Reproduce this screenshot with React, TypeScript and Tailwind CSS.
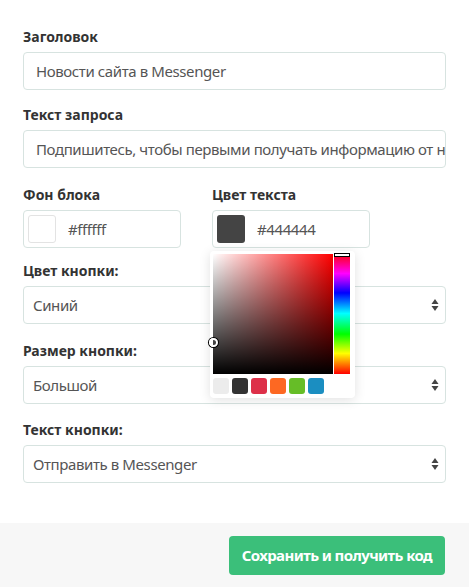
import React from 'react';

const font = { fontFamily: '"Noto Sans", "Open Sans", sans-serif' };

function Label({ children }: { children: React.ReactNode }) {
  return <div className="text-[14px] font-bold text-[#333] leading-[20px] mb-[5px]">{children}</div>;
}

function TextBox({ value }: { value: string }) {
  return (
    <div className="h-[38px] border border-[#d7e3e0] rounded-[4px] bg-white px-[12px] flex items-center overflow-hidden">
      <span className="text-[15px] tracking-[-0.4px] text-[#555] whitespace-nowrap">{value}</span>
    </div>
  );
}

function SelectBox({ value }: { value: string }) {
  return (
    <div className="h-[38px] border border-[#d7e3e0] rounded-[4px] bg-white pl-[9px] pr-[6px] flex items-center justify-between">
      <span className="text-[15px] tracking-[-0.4px] text-[#555]">{value}</span>
      <svg width="8" height="14" viewBox="0 0 8 14">
        <path d="M4 1 L7.5 6 H0.5 Z" fill="#444" />
        <path d="M4 13 L7.5 8 H0.5 Z" fill="#444" />
      </svg>
    </div>
  );
}

function ColorBox({ color, value, border }: { color: string; value: string; border?: boolean }) {
  return (
    <div className="w-[158px] h-[38px] border border-[#d7e3e0] rounded-[4px] bg-white flex items-center pl-[4px] gap-[12px]">
      <div
        className={`w-[28px] h-[28px] rounded-[3px] ${border ? 'border border-[#e3e3e3]' : ''}`}
        style={{ background: color }}
      />
      <span className="text-[15px] tracking-[-0.4px] text-[#555]">{value}</span>
    </div>
  );
}

const swatches = ['#ececec', '#333333', '#dd3049', '#fd6822', '#66bd27', '#1b8ec1'];

// Открытый выбор цвета под полем «Цвет текста»
function Picker() {
  return (
    <div className="absolute left-[-2px] top-[66px] w-[145px] bg-white rounded-[4px] shadow-[0_2px_12px_rgba(0,0,0,0.12)] p-[3px] z-10">
      <div className="flex gap-[1px]">
        <div className="relative w-[120px] h-[120px] bg-[#ff0000]">
          <div className="absolute inset-0 bg-gradient-to-r from-white to-transparent" />
          <div className="absolute inset-0 bg-gradient-to-b from-transparent to-black" />
          <div className="absolute left-[-4px] top-[84px] w-[9px] h-[9px] rounded-full border-2 border-white shadow-[0_0_0_1px_#000]" />
        </div>
        <div className="relative w-[16px] h-[121px] -mt-[1px] bg-[linear-gradient(to_bottom,#ff0000_0%,#ff00ff_17%,#0000ff_33%,#00ffff_50%,#00ff00_67%,#ffff00_83%,#ff0000_100%)]">
          <div className="absolute left-0 top-0 w-[16px] h-[4px] bg-white border border-black" />
        </div>
      </div>
      <div className="flex gap-[3px] mt-[4px] mb-[1px]">
        {swatches.map((c) => (
          <div key={c} className="w-[16px] h-[16px] rounded-[3px]" style={{ background: c }} />
        ))}
      </div>
    </div>
  );
}

export default function App() {
  return (
    <div className="w-[469px] h-[587px] bg-white flex flex-col" style={font}>
      <div className="flex-1 px-[23px] pt-[27px]">
        <Label>Заголовок</Label>
        <TextBox value="Новости сайта в Messenger" />
        <div className="h-[15px]" />
        <Label>Текст запроса</Label>
        <TextBox value="Подпишитесь, чтобы первыми получать информацию от нас" />
        <div className="h-[17px]" />
        <div className="flex gap-[31px]">
          <div>
            <Label>Фон блока</Label>
            <ColorBox color="#ffffff" value="#ffffff" border />
          </div>
          <div className="relative">
            <Label>Цвет текста</Label>
            <ColorBox color="#444444" value="#444444" />
            <Picker />
          </div>
        </div>
        <div className="h-[13px]" />
        <Label>Цвет кнопки:</Label>
        <SelectBox value="Синий" />
        <div className="h-[17px]" />
        <Label>Размер кнопки:</Label>
        <SelectBox value="Большой" />
        <div className="h-[16px]" />
        <Label>Текст кнопки:</Label>
        <SelectBox value="Отправить в Messenger" />
      </div>
      <div className="h-[64px] bg-[#f7f7f7] flex items-center justify-end px-[24px]">
        <button className="h-[39px] px-[13px] rounded-[4px] bg-[#3bbf7a] text-white text-[15px] tracking-[-0.6px] font-bold">
          Сохранить и получить код
        </button>
      </div>
    </div>
  );
}
